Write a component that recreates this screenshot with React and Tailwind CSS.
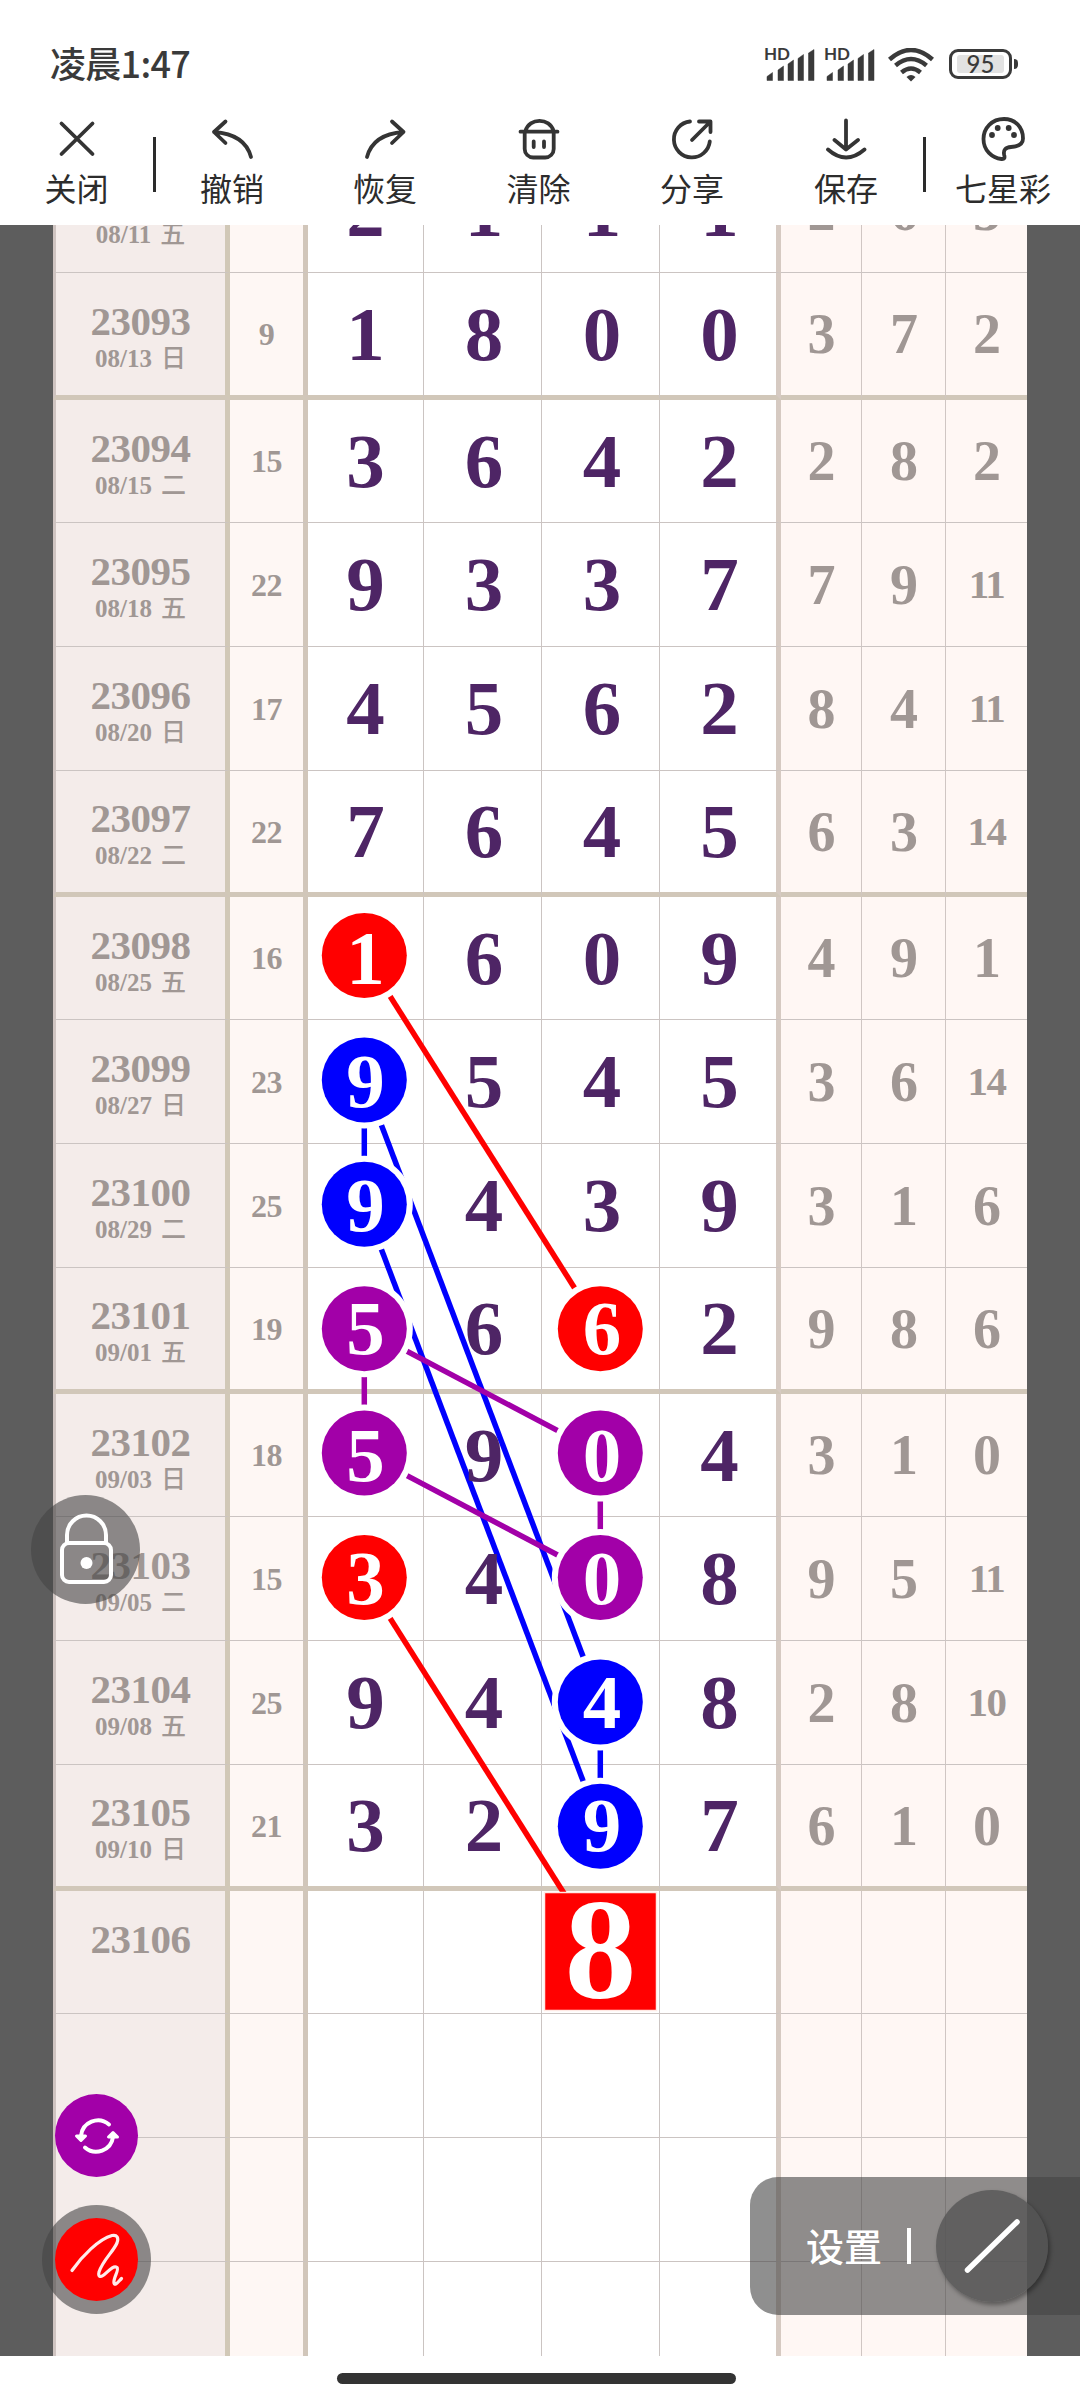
import clsx from "clsx";

const draws = [
  { id: "23092", date: "08/11 五", sum: "", main: "2111", extra: [2, 6, 3] },
  { id: "23093", date: "08/13 日", sum: 9, main: "1800", extra: [3, 7, 2], size: "h-[127px]", end: true },
  { id: "23094", date: "08/15 二", sum: 15, main: "3642", extra: [2, 8, 2], size: "h-[123px]" },
  { id: "23095", date: "08/18 五", sum: 22, main: "9337", extra: [7, 9, 11] },
  { id: "23096", date: "08/20 日", sum: 17, main: "4562", extra: [8, 4, 11] },
  { id: "23097", date: "08/22 二", sum: 22, main: "7645", extra: [6, 3, 14], size: "h-[126px]", end: true },
  { id: "23098", date: "08/25 五", sum: 16, main: "1609", extra: [4, 9, 1], size: "h-[123px]", marked: [0] },
  { id: "23099", date: "08/27 日", sum: 23, main: "9545", extra: [3, 6, 14], marked: [0] },
  { id: "23100", date: "08/29 二", sum: 25, main: "9439", extra: [3, 1, 6], marked: [0] },
  { id: "23101", date: "09/01 五", sum: 19, main: "5662", extra: [9, 8, 6], size: "h-[126px]", end: true, marked: [0, 2] },
  { id: "23102", date: "09/03 日", sum: 18, main: "5904", extra: [3, 1, 0], size: "h-[123px]", marked: [0, 2] },
  { id: "23103", date: "09/05 二", sum: 15, main: "3408", extra: [9, 5, 11], marked: [0, 2] },
  { id: "23104", date: "09/08 五", sum: 25, main: "9448", extra: [2, 8, 10], marked: [2] },
  { id: "23105", date: "09/10 日", sum: 21, main: "3297", extra: [6, 1, 0], size: "h-[126px]", end: true, marked: [2] },
  { id: "23106", date: "", sum: "", main: "  8 ", extra: ["", "", ""], size: "h-[123px]", guess: 2 },
  { id: "", date: "", sum: "", main: "    ", extra: ["", "", ""] },
  { id: "", date: "", sum: "", main: "    ", extra: ["", "", ""] },
  { id: "", date: "", sum: "", main: "    ", extra: ["", "", ""] },
];

const RED = "#ff0000";
const BLUE = "#0000fe";
const PURPLE = "#a200a8";

// [column, row] on the trend chart, row 0 is issue 23098
const px = (c) => 364.3 + c * 118;
const py = (r) => 955.5 + r * 124.4;

const links = [
  [0, 0, 2, 3, RED],
  [0, 5, 2, 8, RED],
  [0, 1, 0, 2, BLUE],
  [0, 1, 2, 6, BLUE],
  [0, 2, 2, 7, BLUE],
  [2, 6, 2, 7, BLUE],
  [0, 3, 0, 4, PURPLE],
  [0, 3, 2, 4, PURPLE],
  [0, 4, 2, 5, PURPLE],
  [2, 4, 2, 5, PURPLE],
];

const dots = [
  [0, 0, RED],
  [0, 1, BLUE],
  [0, 2, BLUE],
  [0, 3, PURPLE],
  [2, 3, RED],
  [0, 4, PURPLE],
  [2, 4, PURPLE],
  [0, 5, RED],
  [2, 5, PURPLE],
  [2, 6, BLUE],
  [2, 7, BLUE],
];

function Signal() {
  return (
    <div className="relative h-[33px] w-[52px]">
      <span className="absolute -left-px -top-px font-['Lato','Inter',sans-serif] text-[17px] font-bold leading-[14px] text-[#3a3a3a]">
        HD
      </span>
      <svg viewBox="0 0 52 33" className="h-[33px] w-[52px]" fill="#3a3a3a">
        <path d="M2 32.500v-4l5.500-4v8zM13 32.500V22l5.500-4v14.500zM23 32.500V16l5.500-4v20.500zM33 32.500V10.500l5.500-4v26zM43.500 32.500V5l5.500-3.500v31z" stroke="#3a3a3a" strokeWidth="0.500" strokeLinejoin="round" />
      </svg>
    </div>
  );
}

function StatusBar() {
  return (
    <div className="flex h-[110px] items-start justify-between pl-[50px] pr-[62px] pt-[46px]">
      <div className="-mt-[2px] font-['Noto_Sans_CJK_SC',sans-serif] text-[36px] font-medium leading-[36px] tracking-[-0.7px] text-[#3a3a3a]">
        凌晨1:47
      </div>
      <div className="flex items-start pt-[2px]">
        <Signal />
        <div className="w-2" />
        <Signal />
        <svg viewBox="0 0 46 34" className="ml-[11px] h-[34px] w-[46px]" fill="none" stroke="#3a3a3a" strokeWidth="4.500">
          <path d="M1.500 11.500Q23-7.500 44.500 11.500M7.500 17.500Q23 4.500 38.500 17.500M13.500 24.500Q23 16.500 32.500 24.500" />
          <path d="M18.500 29q4.500-4 9 0l-4.500 4.500z" fill="#3a3a3a" stroke="none" />
        </svg>
        <div className="ml-[15px] mt-px flex items-center">
          <div className="flex h-[30px] w-[63px] items-center justify-center rounded-[9px] border-[3px] border-[#3a3a3a]">
            <span className="flex h-[18px] w-[47px] items-center justify-center rounded-[3px] bg-[#e2e2e2] font-['Lato',sans-serif] text-[24px] font-medium text-[#3a3a3a]">
              95
            </span>
          </div>
          <div className="ml-[2px] h-[10px] w-[4px] rounded-r bg-[#3a3a3a]" />
        </div>
      </div>
    </div>
  );
}

function Tool({ label, width, children }) {
  return (
    <div className={clsx("flex flex-col items-center pt-[5px]", width)}>
      <svg viewBox="0 0 48 48" className="size-12" fill="none" stroke="#343434" strokeWidth="3.800" strokeLinecap="round" strokeLinejoin="round">
        {children}
      </svg>
      <span className="mt-[6px] font-['Noto_Sans_CJK_SC',sans-serif] text-[32px] leading-[36px] text-[#2c2c2c]">{label}</span>
    </div>
  );
}

function Toolbar() {
  return (
    <div className="flex h-[115px]">
      <Tool label="关闭" width="w-[153px]">
        <path d="M8.500 8.500L39.500 39M39.500 8.500L8.500 39" />
      </Tool>
      <div className="mt-[27px] h-[55px] w-[3px] bg-[#2c2c2c]" />
      <Tool label="撤销" width="w-[152px]">
        <path d="M17.500 6.500L6 17L17.500 28M6 17C27 18.500 39 27 43 42" />
      </Tool>
      <Tool label="恢复" width="w-[154px]">
        <path d="M31 6.500L42.500 17L31 28M42.500 17C21.500 18.500 10 27 6 42" />
      </Tool>
      <Tool label="清除" width="w-[153px]">
        <path d="M5.500 16.700H42.500M10.500 16C14 2.500 35 2.500 38.500 16M9.700 17V34a8.500 8.500 0 0 0 8.500 8.500h12a8.500 8.500 0 0 0 8.500-8.500V17M18.700 26.500v5.500M29 26.500v5.500" />
      </Tool>
      <Tool label="分享" width="w-[154px]">
        <path d="M22 6.500A18 18 0 1 0 41.800 26.500M24 25L42 7M31 6.500H42.500V17" />
      </Tool>
      <Tool label="保存" width="w-[154px]">
        <path d="M24 5.500V34M12.500 25L24 34.500L36 25M6 34.500Q24 50.500 42.500 34.500" />
      </Tool>
      <div className="mt-[27px] h-[55px] w-[3px] bg-[#2c2c2c]" />
      <Tool label="七星彩" width="w-[154px]">
        <path d="M25 4C13 4 4.500 13 4.500 24C4.500 35.500 13 43 22.500 44C25.500 44.200 26 43 25.200 40C24 35 26.500 32.500 32 32C39.500 31.500 44 29 44 23.500C44 12 36 4 25 4Z" />
        <g fill="#343434" stroke="none">
          <circle cx="13" cy="20" r="2.900" />
          <circle cx="18.700" cy="13" r="2.900" />
          <circle cx="29.700" cy="13" r="2.900" />
          <circle cx="35" cy="20" r="2.900" />
        </g>
      </Tool>
    </div>
  );
}

function Row({ draw }) {
  const cell = clsx(
    "flex items-center justify-center",
    draw.end ? "border-b-[5px] border-b-[#d1c7b9]" : "border-b border-b-[#cbc4c2]"
  );
  const [day, week] = draw.date.split(" ");

  return (
    <div
      className={clsx(
        "grid grid-cols-[177px_78px_116px_118px_118px_121px_81px_84px_81px]",
        draw.size || "h-[124px]"
      )}
    >
      {/* Issue */}
      <div className={clsx(cell, "flex-col border-l-[3px] border-r-[5px] border-l-[#cfc4c1] border-r-[#d1c8b7] bg-[#f4ecea] pt-[5px] text-[#a09794]")}>
        <span className="h-[44px] text-[41px] leading-[44px] tracking-[-0.5px]">{draw.id}</span>
        <span className="flex h-[32px] gap-[9px] text-[25px] leading-[32px]">
          {day}
          <span className="font-medium">{week}</span>
        </span>
      </div>

      {/* Sum */}
      <div className={clsx(cell, "border-r-[5px] border-r-[#d1c6ba] bg-[#fef7f4] text-[32px] tracking-[-0.5px] text-[#a09794]")}>
        {draw.sum}
      </div>

      {/* Main numbers */}
      {draw.main.split("").map((n, i) => (
        <div
          key={i}
          className={clsx(
            cell,
            "bg-white",
            i > 0 && draw.guess !== i && "pl-[3px]",
            i === 3 ? "border-r-[5px] border-r-[#d6cac2]" : "border-r border-r-[#cbc4c2]"
          )}
        >
          <span
            className={clsx(
              "relative z-10",
              draw.guess === i ? "-mt-[4px] text-[143px] leading-[118px]" : "-mt-px text-[77px] leading-[80px]",
              draw.marked?.includes(i) || draw.guess === i ? "text-white" : "text-[#4e2565]"
            )}
          >
            {n}
          </span>
        </div>
      ))}

      {/* Extra numbers */}
      {draw.extra.map((n, i) => (
        <div
          key={i}
          className={clsx(
            cell,
            "bg-[#fff7f4] text-[#a09794]",
            i < 2 && "border-r border-r-[#d0c6c3]",
            n > 9 ? "text-[41px] tracking-[-1.5px]" : "pl-px text-[56px]"
          )}
        >
          {n}
        </div>
      ))}
    </div>
  );
}

function Marks() {
  return (
    <svg viewBox="0 225 1080 2131" className="absolute inset-0 h-[2131px] w-[1080px]">
      {links.map(([c1, r1, c2, r2, color], i) => (
        <line key={i} x1={px(c1)} y1={py(r1)} x2={px(c2)} y2={py(r2)} stroke={color} strokeWidth="5.500" />
      ))}
      {dots.map(([c, r, color], i) => (
        <g key={i}>
          <circle cx={px(c)} cy={py(r)} r="48.500" fill="#fff" />
          <circle cx={px(c)} cy={py(r)} r="42.500" fill={color} />
        </g>
      ))}
      <rect x="544.500" y="1892.500" width="112" height="118" fill={RED} stroke="#ffe9e4" strokeWidth="1.500" />
    </svg>
  );
}

function FloatingButtons() {
  return (
    <>
      {/* Lock */}
      <div className="absolute left-[31px] top-[1270px] z-20 flex size-[109px] items-center justify-center rounded-full bg-[#444]/60">
        <svg viewBox="0 0 60 76" className="h-[76px] w-[60px]" fill="none" stroke="#fff" strokeWidth="4">
          <rect x="6" y="31" width="49" height="39" rx="7" />
          <path d="M11 31V23a19.500 19.500 0 0 1 39 0v8" />
          <circle cx="30.500" cy="51" r="6" fill="#fff" stroke="none" />
        </svg>
      </div>

      {/* Switch color */}
      <div className="absolute left-[55px] top-[1869px] z-20 flex size-[83px] items-center justify-center rounded-full bg-[#a200a8]">
        <svg viewBox="0 0 48 48" className="size-12" fill="none" stroke="#fff" strokeWidth="4" strokeLinecap="round">
          <path d="M36 12.500A17 17 0 0 0 8 24M12 35.500A17 17 0 0 0 40 25" />
          <path d="M3.500 24h9L8 28.500zM35.500 25h9L40 20.500z" fill="#fff" strokeWidth="3" strokeLinejoin="round" />
        </svg>
      </div>

      {/* Pen */}
      <div className="absolute left-[42px] top-[1980px] z-20 flex size-[109px] items-center justify-center rounded-full bg-[#444]/60">
        <div className="flex size-[83px] items-center justify-center rounded-full bg-[#ff0000]">
          <svg viewBox="0 0 83 83" className="size-[83px]" fill="none" stroke="#fff" strokeOpacity="0.920" strokeWidth="3.200" strokeLinecap="round" strokeLinejoin="round">
            <path d="M17 52.500C27 38 44 21 57 17.500C62 16.500 64 19.500 62 25C58 34 48 42 44 54C43 58.500 45 59.500 48 57.500C52 55 58 46.500 62 49.500C64.500 52 58 60 59 65C60 68.500 63 64 66.500 60.500" />
          </svg>
        </div>
      </div>

      {/* Settings */}
      <div className="absolute right-0 top-[1952px] z-20 flex h-[138px] w-[330px] items-center rounded-l-[28px] bg-[#444]/60 pl-[56px]">
        <span className="-mt-[3px] font-['Noto_Sans_CJK_SC',sans-serif] text-[38px] font-medium leading-[44px] text-white">设置</span>
        <div className="ml-[25px] h-[36px] w-[4px] bg-white" />
        <div className="ml-[25px] flex size-[112px] items-center justify-center rounded-full bg-[#555]/80 shadow-[2px_3px_4px_rgba(0,0,0,0.35)]">
          <svg viewBox="0 0 60 60" className="size-[60px]" stroke="#fff" strokeWidth="5.500" strokeLinecap="round">
            <path d="M5.500 54L55 6" />
          </svg>
        </div>
      </div>
    </>
  );
}

export default function App() {
  return (
    <div className="flex h-[2400px] w-[1080px] flex-col overflow-hidden bg-white">
      <StatusBar />
      <Toolbar />

      <div className="relative h-[2131px] overflow-hidden bg-[#5d5d5d]">
        <div className="-mt-[76px] ml-[53px] w-[974px] font-['Liberation_Serif','Noto_Sans_CJK_SC',serif] font-bold">
          {draws.map((draw, i) => (
            <Row key={i} draw={draw} />
          ))}
        </div>
        <Marks />
        <FloatingButtons />
      </div>

      {/* Home indicator */}
      <div className="pl-[337px] pt-[17px]">
        <div className="h-[11px] w-[399px] rounded-full bg-[#333]" />
      </div>
    </div>
  );
}
